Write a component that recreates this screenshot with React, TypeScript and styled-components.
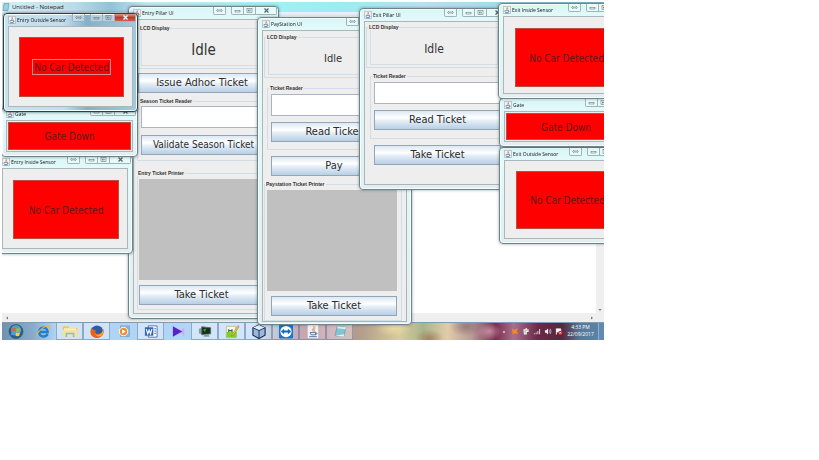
import React from "react";
import styled, { createGlobalStyle, css } from "styled-components";

const uiFont = '"Open Sans", "Noto Sans", sans-serif';
const swingFont = '"DejaVu Sans Condensed", "DejaVu Sans", sans-serif';
const labelFont = '"Liberation Sans", Arial, sans-serif';

const GlobalStyle = createGlobalStyle`
  * { box-sizing: border-box; }
  body { margin: 0; background: #fff; font-family: ${uiFont}; color: #222; }
  button, textarea { font: inherit; margin: 0; padding: 0; }
`;

const Desktop = styled.main`
  position: relative;
  display: flex;
  flex-direction: column;
  margin: 2px;
  max-width: 602px;
  overflow: hidden;
`;

/* Notepad, the maximised window at the back */
const Notepad = styled.section`
  display: flex;
  flex-direction: column;
  background: #fff;
`;

const NotepadTitle = styled.header`
  display: flex;
  align-items: center;
  gap: 2px;
  height: 10px;
  font-size: 6px;
  line-height: 10px;
  background: linear-gradient(90deg, #d4f0f6 0, #b9dde8 12%, #8fc3d8 18%, #c4e8f0 24%, #a4f0f4 42%, #9cecf2 56%, #b8e0f0 70%, #a4dcec 82%, #8cc0d8 100%);
`;

const NotepadMenu = styled.div`
  height: 4px;
  background: #e9eef8;
`;

const NotepadPage = styled.div`
  display: flex;
  min-height: 297px;
`;

const NotepadText = styled.textarea`
  flex: 1;
  border: 0;
  outline: 0;
  resize: none;
  background: #fff;
`;

const VerticalBar = styled.div`
  display: flex;
  align-items: flex-end;
  justify-content: center;
  width: 8px;
  padding-bottom: 1px;
  background: #efefef;
`;

const HorizontalBar = styled.div`
  display: flex;
  align-items: center;
  justify-content: space-between;
  height: 9px;
  padding: 0 10px 0 3px;
  background: #efefef;
`;

const Arrow = styled.svg`
  width: 4px;
  height: 4px;
  fill: #777;
`;

/* Floating windows */
interface Place {
  $x: number;
  $y: number;
  $w: number;
  $h: number;
  $active?: boolean;
}

const Frame = styled.section<Place>`
  position: absolute;
  left: ${(p) => p.$x}px;
  top: ${(p) => p.$y}px;
  width: ${(p) => p.$w}px;
  height: ${(p) => p.$h}px;
  display: flex;
  flex-direction: column;
  padding: 0 4px 4px;
  border: 1px solid ${(p) => (p.$active ? "#28404f" : "#6f8488")};
  border-radius: 4px;
  box-shadow: inset 0 0 0 1px #f2ffff, 0 0 3px rgba(20, 40, 50, ${(p) => (p.$active ? 0.8 : 0.45)});
  background: ${(p) =>
    p.$active
      ? "linear-gradient(90deg, #c8e2ef 0, #c4dceb 45%, #86b0c8 62%, #a5c9dc 100%)"
      : "linear-gradient(180deg, #d8f6f7 0, #e6fafa 14px, #e2f4f6 60%, #e4edf2 100%)"};
`;

const TitleBar = styled.header<{ $h: number }>`
  display: flex;
  align-items: center;
  flex: none;
  height: ${(p) => p.$h}px;
  margin-right: -3px;
  gap: 1px;
  white-space: nowrap;
`;

const Title = styled.h2`
  flex: 1;
  margin: 0;
  font-size: 5px;
  line-height: 8px;
  font-weight: 400;
  color: #111;
`;

const Controls = styled.div`
  display: flex;
  align-self: flex-start;
  margin-left: 4px;
`;

const Control = styled.button<{ $w: number; $close?: boolean }>`
  display: flex;
  align-items: center;
  justify-content: center;
  width: ${(p) => p.$w}px;
  height: 8px;
  border: 1px solid #9db4ba;
  border-top: 0;
  border-left-width: 0;
  background: ${(p) => (p.$close ? "linear-gradient(#dc9c8c, #b93a26 50%, #d2604a)" : "rgba(255,255,255,0.35)")};
  color: ${(p) => (p.$close ? "#fff" : "#56666c")};
  &:first-child { border-left-width: 1px; border-bottom-left-radius: 2px; }
  &:last-child { border-bottom-right-radius: 2px; }
  svg { width: 7px; height: 5px; fill: none; stroke: currentColor; }
`;

const Body = styled.div<{ $pad?: string }>`
  flex: 1;
  display: flex;
  flex-direction: column;
  padding: ${(p) => p.$pad ?? "0"};
  border: 1px solid #a9b7bb;
  background: #eeeeee;
`;

const SignalButton = styled.button`
  flex: 1;
  display: flex;
  align-items: center;
  justify-content: center;
  border: 1px solid #b8503f;
  background: #ff0000;
  color: #5a1a1a;
  font-family: ${swingFont};
  font-size: 10px;
  line-height: 13px;
  white-space: nowrap;
`;

const FocusText = styled.span<{ $focus?: boolean }>`
  padding: 1px 1px 0;
  ${(p) => p.$focus && css`outline: 1px solid #d88a94;`}
`;

/* Swing parts */
const Group = styled.fieldset<{ $margin: string; $pad: string }>`
  display: flex;
  flex-direction: column;
  min-width: 0;
  margin: ${(p) => p.$margin};
  padding: ${(p) => p.$pad};
  border: 1px solid #d3dde6;
`;

const Legend = styled.legend`
  margin-left: -2px;
  padding: 0 1px;
  font: 700 5px/6px ${labelFont};
  color: #333;
`;

const Lcd = styled.output<{ $size: number }>`
  display: flex;
  align-items: center;
  justify-content: center;
  height: 35px;
  padding-top: 3px;
  border: 1px solid #d3dde6;
  border-top: 0;
  font-family: ${swingFont};
  font-size: ${(p) => p.$size}px;
  color: #333;
`;

const ReaderField = styled.textarea`
  display: block;
  height: 22px;
  border: 1px solid #a9b6c2;
  border-radius: 0;
  outline: 0;
  resize: none;
  background: #fff;
`;

const PrintArea = styled.div`
  height: 101px;
  background: #c0c0c0;
`;

const PushButton = styled.button<{ $margin: string; $small?: boolean }>`
  flex: none;
  height: 20px;
  margin: ${(p) => p.$margin};
  border: 1px solid #93a5b8;
  background: linear-gradient(180deg, #dce8f3 0, #ffffff 38%, #e3edf6 55%, #b8cfe5 100%);
  color: #2c2c2c;
  font-family: ${swingFont};
  font-size: ${(p) => (p.$small ? 10 : 11)}px;
  line-height: 18px;
  white-space: nowrap;
`;

/* Taskbar */
const Taskbar = styled.footer`
  display: flex;
  align-items: stretch;
  height: 18px;
  border-top: 1px solid #7e9cb4;
  background:
    radial-gradient(ellipse 14px 9px at 71% 90%, rgba(150, 90, 50, 0.55), transparent),
    radial-gradient(ellipse 18px 8px at 65% 30%, rgba(240, 225, 170, 0.7), transparent),
    radial-gradient(ellipse 12px 8px at 81% 50%, rgba(230, 180, 200, 0.6), transparent),
    radial-gradient(ellipse 16px 10px at 77% 20%, rgba(110, 80, 90, 0.5), transparent),
    linear-gradient(90deg, #6f92b0 0, #86aaca 5%, #b0d2f4 9%, #b3d6fa 42%, #9c9ab4 46%, #a4687c 50%, #b88a94 55%, #b4a08c 60%, #d8cc9c 66%, #a8b48c 70%, #e0cca8 74%, #b89c98 78%, #7c2e50 82%, #a8708c 85%, #6c2848 89%, #54283e 93%, #58789a 96%, #5b86a8 100%);
`;

const Tasks = styled.nav`
  display: flex;
  flex: 1;
`;

const Task = styled.button<{ $open?: boolean }>`
  display: flex;
  align-items: center;
  justify-content: center;
  width: 27px;
  padding: 0;
  border: 1px solid ${(p) => (p.$open ? "rgba(90,120,150,0.55)" : "transparent")};
  border-top: 0;
  background: ${(p) => (p.$open ? "rgba(255,255,255,0.4)" : "transparent")};
  svg { width: 16px; height: 15px; }
`;

const Tray = styled.div`
  display: flex;
  align-items: center;
  gap: 3px;
  color: #fff;
  svg { width: 8px; height: 7px; }
`;

const Clock = styled.time`
  width: 35px;
  padding-top: 1px;
  font-size: 5px;
  line-height: 7px;
  text-align: center;
  color: #fff;
`;

const ShowDesktop = styled.button`
  width: 6px;
  border: 0;
  border-left: 1px solid #8fb0c8;
  background: #5f8bb2;
`;

const AppIcon = styled.svg`
  flex: none;
  width: 8px;
  height: 8px;
`;

const JavaIcon = () => (
  <AppIcon viewBox="0 0 14 16" aria-hidden="true">
    <rect x="0.5" y="0.5" width="13" height="15" fill="#eef2f4" stroke="#8fa0a8" />
    <path d="M7 2c2 2-2 3 0 6M9 4c-2 1-1 2 0 3" fill="none" stroke="#d0643a" strokeWidth="1.3" />
    <path d="M3 9h7v2.500c0 2-7 2-7 0zM10 9.500c2 0 2 2 0 2M3 14h8" fill="none" stroke="#4a6f96" strokeWidth="1.200" />
  </AppIcon>
);

const SwapGlyph = () => (
  <svg viewBox="0 0 14 10"><path d="M4 2L1 5l3 3M10 2l3 3-3 3M3 4h8M3 6h8" /></svg>
);
const MinGlyph = () => (
  <svg viewBox="0 0 14 10"><rect x="2" y="5" width="10" height="3" /></svg>
);
const MaxGlyph = () => (
  <svg viewBox="0 0 14 10"><rect x="2" y="1" width="10" height="8" /><rect x="5" y="4" width="4" height="2" /></svg>
);
const CloseGlyph = () => (
  <svg viewBox="0 0 14 10"><path d="M3 1l8 8M11 1l-8 8" strokeWidth="2.500" /></svg>
);

interface WindowProps {
  title: string;
  x: number;
  y: number;
  w: number;
  h: number;
  bar?: number;
  pad?: string;
  active?: boolean;
  swap?: boolean;
  children: React.ReactNode;
}

function AppWindow({ title, x, y, w, h, bar = 12, pad, active, swap = true, children }: WindowProps) {
  return (
    <Frame $x={x} $y={y} $w={w} $h={h} $active={active} aria-label={title}>
      <TitleBar $h={bar}>
        <JavaIcon />
        <Title>{title}</Title>
        {swap && (
          <Controls>
            <Control $w={13} aria-label="Switch display"><SwapGlyph /></Control>
          </Controls>
        )}
        <Controls>
          <Control $w={13} aria-label="Minimize"><MinGlyph /></Control>
          <Control $w={12} aria-label="Maximize"><MaxGlyph /></Control>
          <Control $w={21} $close={active} aria-label="Close"><CloseGlyph /></Control>
        </Controls>
      </TitleBar>
      <Body $pad={pad}>{children}</Body>
    </Frame>
  );
}

function Signal({ text, focus }: { text: string; focus?: boolean }) {
  return (
    <SignalButton>
      <FocusText $focus={focus}>{text}</FocusText>
    </SignalButton>
  );
}

function LcdGroup({ size, margin }: { size: number; margin: string }) {
  return (
    <Group $margin={margin} $pad="0 3px 2px">
      <Legend>LCD Display</Legend>
      <Lcd $size={size}>Idle</Lcd>
    </Group>
  );
}

const StartIcon = () => (
  <svg viewBox="0 0 32 32">
    <circle cx="16" cy="16" r="15" fill="#2c5f86" stroke="#234a66" />
    <circle cx="16" cy="13" r="11" fill="#5b9cc0" />
    <path d="M7 10q4-3 8-1l-1 7q-4-2-8 0z" fill="#e8622c" />
    <path d="M17 9q4 2 8-1l-1 8q-4 2-8 0z" fill="#8cc63e" />
    <path d="M6 18q4-2 8 0l-1 7q-4-3-8-1z" fill="#3ba4e8" />
    <path d="M16 18q4 2 8 0l-1 7q-4 2-8 0z" fill="#fbd13a" />
  </svg>
);
const ExplorerIcon = () => (
  <svg viewBox="0 0 32 32">
    <path d="M26 21c-5 9-19 7-18-4 1-12 18-12 18 0H9" fill="none" stroke="#1f7fd0" strokeWidth="5" />
    <path d="M4 26C-1 19 22 1 29 5c2 2 1 5-1 8" fill="none" stroke="#e8b83c" strokeWidth="2.500" />
  </svg>
);
const FolderIcon = () => (
  <svg viewBox="0 0 40 32">
    <path d="M2 3h14l3 4h19v20H2z" fill="#e6c868" />
    <path d="M5 8h30v8H5z" fill="#f8f0cc" />
    <path d="M2 12h36v17H2z" fill="#f5e3a0" />
    <path d="M11 30v-9h18v9" fill="none" stroke="#7fbfdc" strokeWidth="4" />
  </svg>
);
const FirefoxIcon = () => (
  <svg viewBox="0 0 32 32">
    <circle cx="16" cy="16" r="13" fill="#2a5ca8" />
    <path d="M4 8c-6 13 2 22 12 22 11 0 17-10 13-20-1 7-5 11-10 11-7 0-8-5-5-8-5 0-8-2-10-5z" fill="#e8641c" />
    <path d="M29 10c0 10-8 16-17 12 8 10 20 2 17-12z" fill="#f8b42c" />
  </svg>
);
const MediaIcon = () => (
  <svg viewBox="0 0 32 32">
    <rect x="9" y="4" width="19" height="23" fill="#88b4d8" stroke="#6a98c0" />
    <circle cx="15" cy="16" r="9" fill="#f08a2c" stroke="#fff" strokeWidth="2" />
    <path d="M12 11l8 5-8 5z" fill="#fff" />
  </svg>
);
const WordIcon = () => (
  <svg viewBox="0 0 32 32">
    <path d="M10 4h19v24H10z" fill="#fff" stroke="#4a74b4" strokeWidth="2" />
    <path d="M3 7h18v18H3z" fill="#3464b4" />
    <path d="M6 11l3 10 3-8 3 8 3-10" fill="none" stroke="#fff" strokeWidth="2.500" />
    <path d="M23 10h4M23 15h4M23 20h4" stroke="#4a74b4" strokeWidth="2" />
  </svg>
);
const PlayerIcon = () => (
  <svg viewBox="0 0 32 32">
    <path d="M20 16l9-9v19z" fill="#c8b0ec" />
    <path d="M5 5l20 11L5 27z" fill="#5b22c8" />
  </svg>
);
const MonitorIcon = () => (
  <svg viewBox="0 0 32 32">
    <path d="M3 10l7-2v14l-7-2z" fill="#8c98a0" />
    <path d="M9 6l19 2v13L9 23z" fill="#16301c" stroke="#5c6c68" strokeWidth="2" />
    <path d="M12 12l7-3-3 8z" fill="#3c9c4c" />
    <path d="M15 22h8l3 5H13z" fill="#8e9a9e" />
  </svg>
);
const EditorIcon = () => (
  <svg viewBox="0 0 32 32">
    <path d="M4 5h20v24H4z" fill="#f4f8e4" stroke="#7c9c4c" />
    <path d="M4 17h22v12H4z" fill="#86cc2c" />
    <path d="M9 11v6m0-3h7m0-3v6" stroke="#365" strokeWidth="2.500" />
    <path d="M29 3L17 21l-2 5 5-3L31 6z" fill="#f0c840" stroke="#8a7428" />
  </svg>
);
const CubeIcon = () => (
  <svg viewBox="0 0 32 32">
    <path d="M16 2l13 6v16l-13 7L3 24V8z" fill="#9ab8dc" stroke="#1e3254" strokeWidth="2.500" />
    <path d="M3 8l13 6 13-6L16 2z" fill="#e2ecf6" />
    <path d="M3 8l13 6v17M16 14l13-6" fill="none" stroke="#1e3254" strokeWidth="2" />
  </svg>
);
const ViewerIcon = () => (
  <svg viewBox="0 0 32 32">
    <rect x="1" y="1" width="30" height="30" rx="3" fill="#1478d0" />
    <circle cx="16" cy="16" r="12" fill="#fff" />
    <path d="M5 16l7-6v4h8v-4l7 6-7 6v-4h-8v4z" fill="#1468b8" />
  </svg>
);
const JavaTaskIcon = () => (
  <svg viewBox="0 0 32 32">
    <rect x="4" y="1" width="24" height="30" rx="2" fill="#f2f2f2" stroke="#aaa" />
    <path d="M17 4c5 4-5 5 0 12M21 9c-5 3-2 4-1 7" fill="none" stroke="#e07028" strokeWidth="2" />
    <path d="M10 18h12l-1 5h-9zM22 19c4 0 2 4-1 4M8 27h16" fill="none" stroke="#48709c" strokeWidth="2" />
  </svg>
);
const NotesIcon = () => (
  <svg viewBox="0 0 32 32">
    <path d="M10 5l19 2-5 20-19-2z" fill="#82c4d4" stroke="#4c8494" />
    <path d="M11 5l18 2-1 4-18-2z" fill="#d8eef0" />
    <path d="M5 25l19 2 1-5z" fill="#e4f2f2" />
  </svg>
);

const tasks: { name: string; open?: boolean; icon: React.ReactNode }[] = [
  { name: "Start", icon: <StartIcon /> },
  { name: "Internet Explorer", icon: <ExplorerIcon /> },
  { name: "Windows Explorer", open: true, icon: <FolderIcon /> },
  { name: "Firefox", open: true, icon: <FirefoxIcon /> },
  { name: "Media Player", icon: <MediaIcon /> },
  { name: "Word", open: true, icon: <WordIcon /> },
  { name: "Video player", icon: <PlayerIcon /> },
  { name: "Remote session", open: true, icon: <MonitorIcon /> },
  { name: "Text editor", open: true, icon: <EditorIcon /> },
  { name: "NetBeans", open: true, icon: <CubeIcon /> },
  { name: "TeamViewer", open: true, icon: <ViewerIcon /> },
  { name: "Java", open: true, icon: <JavaTaskIcon /> },
  { name: "Notepad", open: true, icon: <NotesIcon /> },
];

export default function App() {
  return (
    <>
      <GlobalStyle />
      <Desktop>
        <Notepad aria-label="Notepad">
          <NotepadTitle>
            <AppIcon viewBox="0 0 14 16" aria-hidden="true">
              <path d="M3 1h10l-2 14H1z" fill="#9ad0e0" stroke="#4c8494" />
            </AppIcon>
            Untitled - Notepad
          </NotepadTitle>
          <NotepadMenu />
          <NotepadPage>
            <NotepadText aria-label="Document text" />
            <VerticalBar><Arrow viewBox="0 0 8 8"><path d="M1 2h6L4 6z" /></Arrow></VerticalBar>
          </NotepadPage>
          <HorizontalBar>
            <Arrow viewBox="0 0 8 8"><path d="M6 1v6L2 4z" /></Arrow>
            <Arrow viewBox="0 0 8 8"><path d="M2 1v6l4-3z" /></Arrow>
          </HorizontalBar>
        </Notepad>

        <Taskbar>
          <Tasks aria-label="Taskbar">
            {tasks.map((t) => (
              <Task key={t.name} $open={t.open} aria-label={t.name}>{t.icon}</Task>
            ))}
          </Tasks>
          <Tray>
            <svg viewBox="0 0 16 16"><path d="M5 10l3-4 3 4z" fill="#fff" /></svg>
            <svg viewBox="0 0 16 16"><path d="M0 2l7 2 8-4-3 7 3 7-7-2-7 3 2-6z" fill="#f48a1c" /></svg>
            <svg viewBox="0 0 16 16"><path d="M2 3h5V0h3v3h4v6h-4v6H3z" fill="#eee" /><path d="M6 5v7M9 5h3" stroke="#666" /></svg>
            <svg viewBox="0 0 16 16"><path d="M1 14v-2h2v2zM5 14v-4h2v4zM9 14V7h2v7zM13 14V2h2v12z" fill="#e8e8e8" /></svg>
            <svg viewBox="0 0 16 16"><path d="M1 5h3l4-4v14l-4-4H1z" fill="#eee" /><path d="M10 4q3 4 0 8M13 2q4 6 0 12" fill="none" stroke="#eee" strokeWidth="1.500" /></svg>
            <svg viewBox="0 0 16 16"><path d="M2 1v14M3 2h9v7H3z" fill="#fff" stroke="#fff" strokeWidth="2" /><circle cx="11" cy="11" r="5" fill="#d8242c" /><path d="M9 9l4 4M13 9l-4 4" stroke="#fff" strokeWidth="1.500" /></svg>
          </Tray>
          <Clock>4:33 PM<br />22/09/2017</Clock>
          <ShowDesktop aria-label="Show desktop" />
        </Taskbar>

        <AppWindow title="Entry Pillar UI" x={126} y={4} w={151} h={313} pad="0 3px">
          <LcdGroup margin="5px 0 0" size={15} />
          <PushButton $margin="4px 4px 0 1px">Issue Adhoc Ticket</PushButton>
          <Group $margin="5px 0 0" $pad="2px 3px 5px">
            <Legend>Season Ticket Reader</Legend>
            <ReaderField aria-label="Season Ticket Reader" />
            <PushButton $margin="7px 0 0" $small>Validate Season Ticket</PushButton>
          </Group>
          <Group $margin="9px 0 0" $pad="3px 5px 4px 1px">
            <Legend>Entry Ticket Printer</Legend>
            <PrintArea />
            <PushButton $margin="5px 0 0">Take Ticket</PushButton>
          </Group>
        </AppWindow>

        <AppWindow title="PayStation UI" x={255} y={15} w={155} h={308} pad="0 4px 0 1px">
          <LcdGroup margin="3px 0 0" size={11} />
          <Group $margin="7px 0 0 3px" $pad="3px 4px 7px 3px">
            <Legend>Ticket Reader</Legend>
            <ReaderField aria-label="PayStation Ticket Reader" />
            <PushButton $margin="6px 0 0">Read Ticket</PushButton>
          </Group>
          <PushButton $margin="6px 5px 0 7px">Pay</PushButton>
          <Group $margin="5px 0 0" $pad="3px 4px 4px 2px">
            <Legend>Paystation Ticket Printer</Legend>
            <PrintArea />
            <PushButton $margin="5px 0 0 4px">Take Ticket</PushButton>
          </Group>
        </AppWindow>

        <AppWindow title="Exit Pillar UI" x={357} y={6} w={151} h={182} pad="0 2px 0 1px">
          <LcdGroup margin="2px 0 0" size={12} />
          <Group $margin="5px 0 0 4px" $pad="3px 0 8px 3px">
            <Legend>Ticket Reader</Legend>
            <ReaderField aria-label="Exit Ticket Reader" />
            <PushButton $margin="6px 0 0">Read Ticket</PushButton>
          </Group>
          <PushButton $margin="6px 1px 0 8px">Take Ticket</PushButton>
        </AppWindow>

        <AppWindow title="Exit Outside Sensor" x={497} y={145} w={136} h={97} pad="10px 10px 9px 11px">
          <Signal text="No Car Detected" />
        </AppWindow>
        <AppWindow title="Gate" x={497} y={96} w={134} h={49} pad="1px" swap={false}>
          <Signal text="Gate Down" />
        </AppWindow>
        <AppWindow title="Exit Inside Sensor" x={496} y={1} w={136} h={96} pad="11px 10px 6px 11px">
          <Signal text="No Car Detected" />
        </AppWindow>

        <AppWindow title="Entry Inside Sensor" x={-5} y={153} w={136} h={99} pad="11px 8px 9px 10px">
          <Signal text="No Car Detected" />
        </AppWindow>
        <AppWindow title="Gate" x={-1} y={105} w={137} h={50} pad="1px" swap={false}>
          <Signal text="Gate Down" />
        </AppWindow>
        <AppWindow title="Entry Outside Sensor" x={1} y={11} w={135} h={99} pad="10px 8px 9px 10px" active>
          <Signal text="No Car Detected" focus />
        </AppWindow>
      </Desktop>
    </>
  );
}
